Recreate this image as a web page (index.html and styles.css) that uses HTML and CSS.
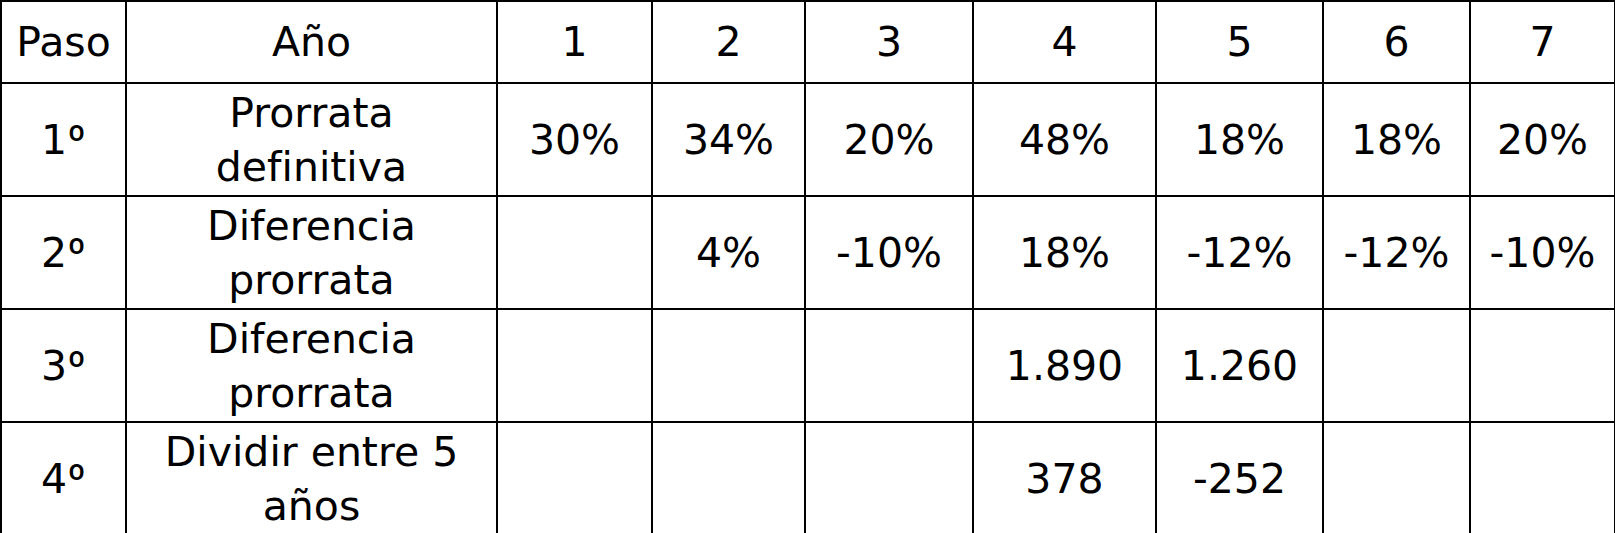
FILE: index.html
```html
<!DOCTYPE html>
<html lang="es">
<head>
<meta charset="utf-8">
<link rel="stylesheet" href="styles.css">
</head>
<body>
<table class="grid">
  <colgroup>
    <col class="c-paso">
    <col class="c-ano">
    <col class="c-1">
    <col class="c-2">
    <col class="c-3">
    <col class="c-4">
    <col class="c-5">
    <col class="c-6">
    <col class="c-7">
  </colgroup>
  <tr class="head">
    <td>Paso</td><td>Año</td><td>1</td><td>2</td><td>3</td><td>4</td><td>5</td><td>6</td><td>7</td>
  </tr>
  <tr class="row">
    <td>1<span class="ord">º</span></td><td>Prorrata<br>definitiva</td><td>30%</td><td>34%</td><td>20%</td><td>48%</td><td>18%</td><td>18%</td><td>20%</td>
  </tr>
  <tr class="row">
    <td>2<span class="ord">º</span></td><td>Diferencia<br>prorrata</td><td></td><td>4%</td><td>-10%</td><td>18%</td><td>-12%</td><td>-12%</td><td>-10%</td>
  </tr>
  <tr class="row">
    <td>3<span class="ord">º</span></td><td>Diferencia<br>prorrata</td><td></td><td></td><td></td><td>1.890</td><td>1.260</td><td></td><td></td>
  </tr>
  <tr class="row">
    <td>4<span class="ord">º</span></td><td>Dividir entre 5<br>años</td><td></td><td></td><td></td><td>378</td><td>-252</td><td></td><td></td>
  </tr>
</table>
</body>
</html>
```

FILE: styles.css
```css
html, body {
  margin: 0;
  padding: 0;
  background: #ffffff;
}

.grid {
  border-collapse: collapse;
  table-layout: fixed;
  width: 1614px;
  font-family: "DejaVu Sans", sans-serif;
  font-size: 41px;
  line-height: 54px;
  color: #000000;
}

.grid td {
  border: 2px solid #000000;
  padding: 0;
  text-align: center;
  vertical-align: middle;
}

.ord {
  font-family: Roboto, "Open Sans", sans-serif;
}

.c-paso { width: 125px; }
.c-ano { width: 371px; }
.c-1 { width: 155px; }
.c-2 { width: 153px; }
.c-3 { width: 168px; }
.c-4 { width: 183px; }
.c-5 { width: 167px; }
.c-6 { width: 147px; }
.c-7 { width: 145px; }

.head td { height: 80px; }
.row td { height: 111px; }
```
